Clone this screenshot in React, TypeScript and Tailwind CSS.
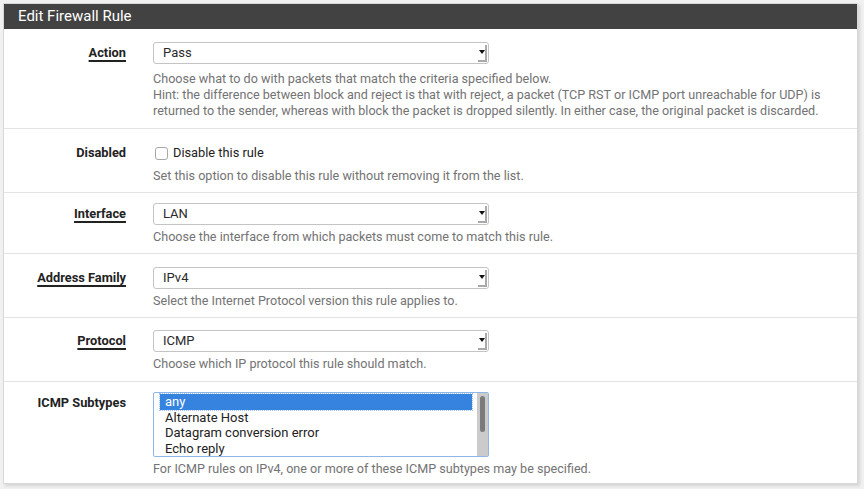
import React from 'react';

type Row = {
  label: string;
  link?: boolean;
  value?: string;
  help: string[];
  pad: string;
};

const FONT = "font-['Roboto','Liberation_Sans',sans-serif]";

const SelectBox: React.FC<{ value: string }> = ({ value }) => (
  <div className="flex h-[22px] w-[336px] items-center justify-between rounded-[3px] border border-[#c4c4c4] bg-white pl-[9px] pr-[1px] text-[13px] text-[#2a2a2a]">
    <span>{value}</span>
    <div className="flex h-[17px] w-[9px] items-center justify-center border-b-2 border-r-2 border-[#a9a9a9] bg-white">
      <div className="h-0 w-0 border-x-[3px] border-t-[4px] border-x-transparent border-t-[#111]" />
    </div>
  </div>
);

const Label: React.FC<{ text: string; link?: boolean }> = ({ text, link }) => (
  <div className="flex h-[22px] items-center justify-end text-[12.8px] font-bold text-[#222]">
    <span className={link ? 'underline decoration-[1.5px] underline-offset-[3px]' : ''}>{text}</span>
  </div>
);

const Help: React.FC<{ lines: string[]; className?: string }> = ({ lines, className }) => (
  <div className={`text-[12.6px] leading-[16px] text-[#737373] ${className ?? 'mt-[4px]'}`}>
    {lines.map((l, i) => (
      <div key={i}>{l}</div>
    ))}
  </div>
);

const rows: Row[] = [
  {
    label: 'Interface',
    link: true,
    value: 'LAN',
    help: ['Choose the interface from which packets must come to match this rule.'],
    pad: 'pt-[10px] pb-[8px]',
  },
  {
    label: 'Address Family',
    link: true,
    value: 'IPv4',
    help: ['Select the Internet Protocol version this rule applies to.'],
    pad: 'pt-[13px] pb-[8px]',
  },
  {
    label: 'Protocol',
    link: true,
    value: 'ICMP',
    help: ['Choose which IP protocol this rule should match.'],
    pad: 'pt-[12px] pb-[9px]',
  },
];

const subtypes = ['any', 'Alternate Host', 'Datagram conversion error', 'Echo reply'];

export default function App() {
  return (
    <div className={`h-[489px] w-[864px] overflow-hidden bg-[#f1f1f1] pl-[3px] pt-[3px] ${FONT}`}>
      <div className="w-[855px] border border-[#d8d8d8] bg-white shadow-[2px_2px_3px_rgba(0,0,0,0.12)]">
        <div className="flex h-[25px] items-center bg-[#424242] pl-[14px] text-[15px] text-white">
          Edit Firewall Rule
        </div>

        {/* Action */}
        <div className="grid grid-cols-[122px_1fr] gap-x-[27px] pb-[9px] pt-[13px]">
          <Label text="Action" link />
          <div>
            <SelectBox value="Pass" />
            <Help
              className="mt-[7px]"
              lines={[
                'Choose what to do with packets that match the criteria specified below.',
                'Hint: the difference between block and reject is that with reject, a packet (TCP RST or ICMP port unreachable for UDP) is',
                'returned to the sender, whereas with block the packet is dropped silently. In either case, the original packet is discarded.',
              ]}
            />
          </div>
        </div>

        {/* Disabled */}
        <div className="grid grid-cols-[122px_1fr] gap-x-[27px] border-t border-[#e4e4e4] pb-[8px] pt-[13px]">
          <Label text="Disabled" />
          <div>
            <div className="flex h-[22px] items-center gap-[5px] pl-[2px] text-[12.8px] text-[#222]">
              <div className="h-[13px] w-[13px] rounded-[3px] border border-[#a8a8a8] bg-white" />
              <span>Disable this rule</span>
            </div>
            <Help lines={['Set this option to disable this rule without removing it from the list.']} />
          </div>
        </div>

        {rows.map((r) => (
          <div
            key={r.label}
            className={`grid grid-cols-[122px_1fr] gap-x-[27px] border-t border-[#e4e4e4] ${r.pad}`}>
            <Label text={r.label} link={r.link} />
            <div>
              <SelectBox value={r.value ?? ''} />
              <Help lines={r.help} />
            </div>
          </div>
        ))}

        {/* ICMP Subtypes */}
        <div className="grid grid-cols-[122px_1fr] gap-x-[27px] border-t border-[#e4e4e4] pb-[6px] pt-[10px]">
          <Label text="ICMP Subtypes" />
          <div>
            <div className="flex h-[65px] w-[336px] rounded-[2px] border border-[#8fb6e6] bg-white">
              <div className="flex-1 pl-[6px] pr-[5px] pt-[1px] text-[13px] leading-[15.5px] text-[#222]">
                {subtypes.map((s, i) => (
                  <div
                    key={s}
                    className={i === 0 ? 'bg-[#3583de] pl-[5px] text-white outline-1 outline-dotted outline-[#9fc4f0]' : 'pl-[5px]'}>
                    {s}
                  </div>
                ))}
              </div>
              <div className="flex w-[11px] justify-center bg-[#cbcbcb] pt-[3px]">
                <div className="h-[36px] w-[5px] rounded-full bg-[#7b7b7b]" />
              </div>
            </div>
            <Help lines={['For ICMP rules on IPv4, one or more of these ICMP subtypes may be specified.']} />
          </div>
        </div>
      </div>
    </div>
  );
}
